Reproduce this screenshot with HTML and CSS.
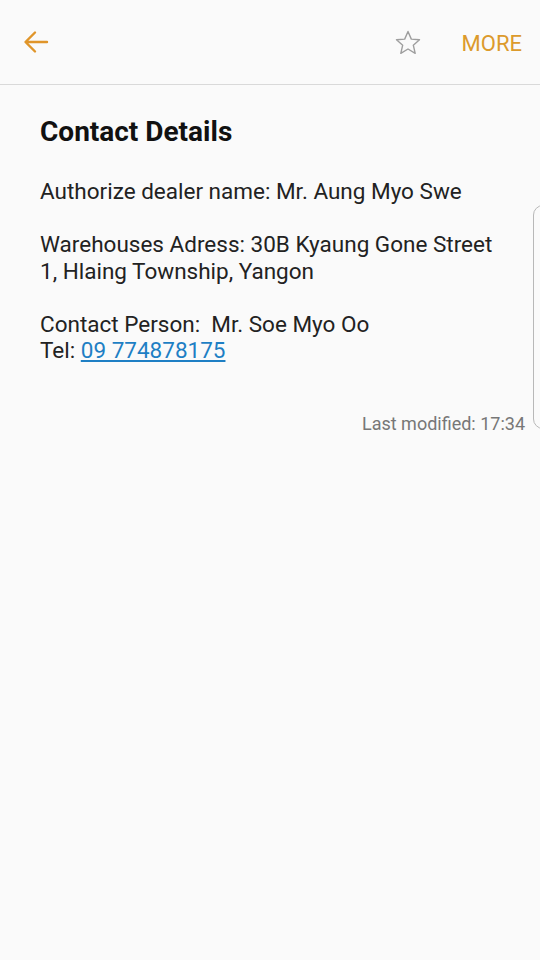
FILE: index.html
```html
<!DOCTYPE html>
<html lang="en">
<head>
  <meta charset="UTF-8" />
  <meta name="viewport" content="width=device-width, initial-scale=1.0" />
  <title>Contact Details</title>
  <link rel="stylesheet" href="styles.css">
</head>
<body>

  <div class="topbar">
    <button class="iconBtn backBtn" aria-label="Back">
      <svg width="28" height="28" viewBox="0 0 28 28">
        <path d="M25 14H4M13 4.5L3.5 14L13 23.5" fill="none" stroke="#e0952a" stroke-width="2.4" stroke-linecap="round" stroke-linejoin="round"/>
      </svg>
    </button>
    <div class="spacer"></div>
    <button class="iconBtn starBtn" aria-label="Favourite">
      <svg width="28" height="28" viewBox="0 0 28 28">
        <path d="M14 2.5l3.3 7.6 8.2.7-6.2 5.4 1.9 8.1L14 20l-7.2 4.3 1.9-8.1-6.2-5.4 8.2-.7z" fill="none" stroke="#9e9e9e" stroke-width="1.4" stroke-linejoin="round"/>
      </svg>
    </button>
    <button class="moreBtn">MORE</button>
  </div>

  <div class="memo">
    <h1>Contact Details</h1>
    <p>Authorize dealer name: Mr. Aung Myo Swe</p>
    <p>Warehouses Adress: 30B Kyaung Gone Street<br>1, Hlaing Township, Yangon</p>
    <p>Contact Person:&nbsp; Mr. Soe Myo Oo<br>Tel: <a href="tel:09774878175">09 774878175</a></p>
    <div class="modified">Last modified: 17:34</div>
  </div>

  <div class="edgeHandle"></div>

</body>
</html>
```

FILE: styles.css
```css
body {
  font-family: Roboto, "Noto Sans", Arial, sans-serif;
  background-color: #fafafa;
  color: #222;
  margin: 0;
  width: 540px;
  height: 960px;
  overflow: hidden;
  position: relative;
}

.topbar {
  display: flex;
  align-items: center;
  height: 85px;
  padding: 0 18px 0 22px;
  border-bottom: 1px solid #d9d9d9;
  box-sizing: border-box;
}

.spacer {
  flex: 1;
}

.iconBtn {
  background: none;
  border: none;
  padding: 0;
  display: flex;
  align-items: center;
  justify-content: center;
  cursor: pointer;
}

.starBtn {
  margin-right: 40px;
  margin-top: 1px;
}

.moreBtn {
  background: none;
  border: none;
  padding: 0;
  margin-top: 2px;
  font-family: Roboto, "Noto Sans", Arial, sans-serif;
  font-size: 22px;
  color: #dc9a2c;
  cursor: pointer;
}

.memo {
  padding: 30px 15px 0 40px;
}

h1 {
  font-size: 28px;
  line-height: 34px;
  font-weight: bold;
  color: #111;
  margin: 0 0 29px;
}

p {
  font-size: 22.5px;
  line-height: 26.5px;
  margin: 0 0 26.5px;
}

a {
  color: #1e7fc4;
}

.modified {
  text-align: right;
  font-size: 18px;
  line-height: 22px;
  color: #777;
  margin-top: 49px;
}

.edgeHandle {
  position: absolute;
  left: 533px;
  top: 205px;
  width: 20px;
  height: 224px;
  border: 1.5px solid #b8b8b8;
  border-radius: 12px;
  box-sizing: border-box;
}
```
